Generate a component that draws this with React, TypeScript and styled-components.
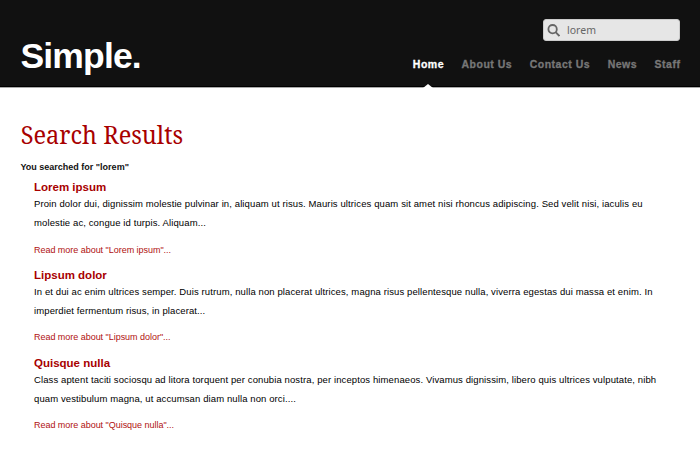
import React from "react";
import styled, { createGlobalStyle } from "styled-components";

const GlobalStyle = createGlobalStyle`
  * { box-sizing: border-box; }
  html, body { margin: 0; padding: 0; background: #fff; }
  body { font-family: "Liberation Sans", Arial, sans-serif; overflow: hidden; }
  h1, h2, p { margin: 0; }
`;

const Page = styled.div`
  width: 700px;
  height: 476px;
  background: #fff;
`;

const Header = styled.header`
  display: flex;
  justify-content: space-between;
  height: 88px;
  padding: 0 19.6px 0 20.5px;
  background: linear-gradient(#111 0 86px, #000 86px 87px, #aaa 87px);
`;

const Logo = styled.div`
  padding-top: 36px;
  font-size: 35.5px;
  line-height: 40px;
  font-weight: bold;
  letter-spacing: -0.85px;
  color: #fff;
  white-space: nowrap;
`;

const HeaderSide = styled.div`
  display: flex;
  flex-direction: column;
  align-items: flex-end;
  padding-top: 19px;
`;

const SearchBox = styled.div`
  display: flex;
  align-items: center;
  width: 137px;
  height: 22px;
  margin-right: 0.4px;
  padding: 0 3px;
  gap: 7px;
  border: 1px solid #ccc;
  border-radius: 3px;
  background: #e6e6e6;
  color: #666;
  font-family: "Noto Sans", sans-serif;
  font-size: 10.5px;
`;

const Nav = styled.nav`
  display: flex;
  flex: 1;
  gap: 17.5px;
  padding-top: 15px;
`;

const NavItem = styled.a<{ $active?: boolean }>`
  display: flex;
  flex-direction: column;
  justify-content: space-between;
  align-items: center;
  font-size: 10.5px;
  line-height: 16px;
  font-weight: bold;
  letter-spacing: 0.5px;
  white-space: nowrap;
  color: ${(p) => (p.$active ? "#fff" : "#777")};
  -webkit-text-stroke: 0.3px currentColor;
`;

const Pointer = styled.span`
  border: 5px solid transparent;
  border-top: 0;
  border-bottom: 4px solid #fff;
`;

const Main = styled.main`
  padding: 29px 20px 0;
`;

const Title = styled.h1`
  padding-left: 0.7px;
  font-family: "Noto Serif", "Liberation Serif", serif;
  font-size: 25px;
  line-height: 34px;
  font-weight: normal;
  color: #a80000;
  transform: scaleX(0.943);
  transform-origin: left;
`;

const Summary = styled.p`
  padding: 9px 0 0 0.5px;
  font-size: 9px;
  line-height: 14px;
  font-weight: bold;
  color: #111;
`;

const Result = styled.article`
  height: 87.8px;
  padding: 6px 0 0 14px;
`;

const ResultTitle = styled.h2`
  font-size: 11.5px;
  line-height: 14.3px;
  color: #a80000;
`;

const Line = styled.p`
  font-size: 9.5px;
  line-height: 19px;
  letter-spacing: 0.11px;
  color: #000;
  white-space: nowrap;
`;

const More = styled.a`
  display: block;
  padding-top: 8.3px;
  font-size: 9px;
  line-height: 18px;
  letter-spacing: -0.03px;
  color: #b01010;
`;

const results = [
  { title: "Lorem ipsum", lines: ["Proin dolor dui, dignissim molestie pulvinar in, aliquam ut risus. Mauris ultrices quam sit amet nisi rhoncus adipiscing. Sed velit nisi, iaculis eu", "molestie ac, congue id turpis. Aliquam..."] },
  { title: "Lipsum dolor", lines: ["In et dui ac enim ultrices semper. Duis rutrum, nulla non placerat ultrices, magna risus pellentesque nulla, viverra egestas dui massa et enim. In", "imperdiet fermentum risus, in placerat..."] },
  { title: "Quisque nulla", lines: ["Class aptent taciti sociosqu ad litora torquent per conubia nostra, per inceptos himenaeos. Vivamus dignissim, libero quis ultrices vulputate, nibh", "quam vestibulum magna, ut accumsan diam nulla non orci...."] },
];

export default function App() {
  return (
    <Page>
      <GlobalStyle />
      <Header>
        <Logo>Simple.</Logo>
        <HeaderSide>
          <SearchBox>
            <svg width="13" height="13" viewBox="0 0 13 13" fill="none" stroke="#666" strokeWidth="1.8">
              <circle cx="5.6" cy="5.2" r="4.2" />
              <path d="M8.6 8.2 12.4 12" />
            </svg>
            <span>lorem</span>
          </SearchBox>
          <Nav>
            {["Home", "About Us", "Contact Us", "News", "Staff"].map((n, i) => (
              <NavItem key={n} $active={i === 0}>
                <span>{n}</span>
                {i === 0 && <Pointer />}
              </NavItem>
            ))}
          </Nav>
        </HeaderSide>
      </Header>
      <Main>
        <Title>Search Results</Title>
        <Summary>You searched for "lorem"</Summary>
        {results.map((r) => (
          <Result key={r.title}>
            <ResultTitle>{r.title}</ResultTitle>
            {r.lines.map((l) => (
              <Line key={l}>{l}</Line>
            ))}
            <More>Read more about "{r.title}"...</More>
          </Result>
        ))}
      </Main>
    </Page>
  );
}
